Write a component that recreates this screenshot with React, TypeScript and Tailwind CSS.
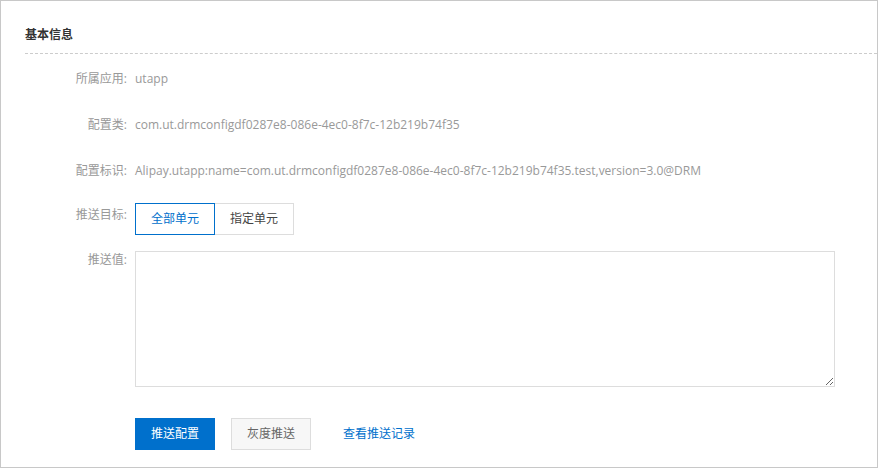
const font = { fontFamily: '"Open Sans", "Noto Sans CJK SC", sans-serif' }

function Row({ label, children }: { label: string; children: React.ReactNode }) {
  return (
    <div className="flex h-[46px] items-center">
      <div className="w-[110px] pr-2 text-right text-[#999]">{label}</div>
      <div className="text-[#999]">{children}</div>
    </div>
  )
}

export default function App() {
  return (
    <div
      className="h-[468px] w-[878px] border border-[#c8c8c8] bg-white text-[12px]"
      style={font}
    >
      <div className="pl-[24px] pt-[25px]">
        <h2 className="h-[18px] font-bold leading-[18px] text-[#333]">基本信息</h2>
        <div className="mt-[9px] border-b border-dashed border-[#ccc]" />

        <div className="mt-[2px]">
          <Row label="所属应用:">utapp</Row>
          <Row label="配置类:">com.ut.drmconfigdf0287e8-086e-4ec0-8f7c-12b219b74f35</Row>
          <Row label="配置标识:">
            Alipay.utapp:name=com.ut.drmconfigdf0287e8-086e-4ec0-8f7c-12b219b74f35.test,version=3.0@DRM
          </Row>
        </div>

        <div className="mt-[9px] flex">
          <div className="w-[110px] pr-2 text-right leading-[24px] text-[#999]">推送目标:</div>
          <div className="flex">
            <button className="h-[32px] w-[80px] border border-[#0070cc] text-[#0070cc]">
              全部单元
            </button>
            <button className="h-[32px] w-[79px] border border-l-0 border-[#ddd] text-[#444]">
              指定单元
            </button>
          </div>
        </div>

        <div className="mt-[16px] flex">
          <div className="w-[110px] pr-2 text-right leading-[18px] text-[#999]">推送值:</div>
          <textarea className="h-[136px] w-[700px] border border-[#ddd] outline-none" />
        </div>

        <div className="mt-[31px] flex items-center pl-[110px]">
          <button className="h-[32px] w-[80px] bg-[#0070cc] text-white">推送配置</button>
          <button className="ml-[16px] h-[32px] w-[80px] border border-[#ddd] bg-[#f7f7f7] text-[#666]">
            灰度推送
          </button>
          <a className="ml-[32px] text-[#0070cc]" href="#">
            查看推送记录
          </a>
        </div>
      </div>
    </div>
  )
}
